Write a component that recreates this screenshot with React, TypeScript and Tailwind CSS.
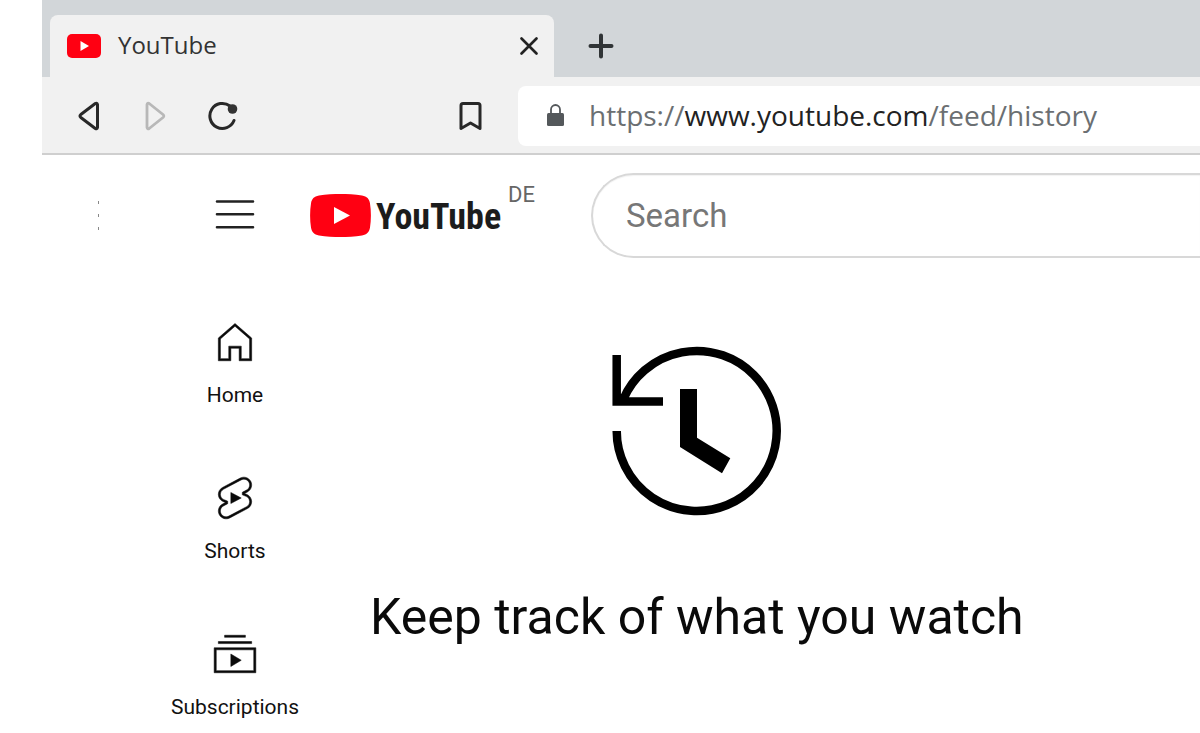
import { FC, FormEvent, ReactNode, useState } from "react";

interface NavItem {
  label: string;
  href: string;
  path: string;
}

const navItems: Array<NavItem> = [
  {
    label: "Home",
    href: "#home",
    path: "m12 4.44 7 6.09V20h-4v-6H9v6H5v-9.47l7-6.09m0-1.32-8 6.96V21h6v-6h4v6h6V10.08l-8-6.96z",
  },
  {
    label: "Shorts",
    href: "#shorts",
    path: "M10 14.65v-5.3L15 12l-5 2.65zm7.77-4.33-1.2-.5L18 9.06c1.84-.96 2.53-3.23 1.56-5.06s-3.24-2.53-5.07-1.56L6 6.94c-1.29.68-2.07 2.04-2 3.49.07 1.42.93 2.67 2.22 3.25.03.01 1.2.5 1.2.5L6 14.93c-1.83.97-2.53 3.24-1.56 5.07.97 1.83 3.24 2.53 5.07 1.56l8.5-4.5c1.29-.68 2.06-2.04 1.99-3.49-.07-1.42-.94-2.68-2.23-3.25zm-.23 5.86-8.5 4.5c-1.34.71-3.01.2-3.72-1.14-.71-1.34-.2-3.01 1.14-3.72l2.04-1.08v-1.21l-.69-.28-1.11-.46c-.99-.41-1.65-1.35-1.7-2.41-.05-1.06.52-2.06 1.46-2.56l8.5-4.5c1.34-.71 3.01-.2 3.72 1.14.71 1.34.2 3.01-1.14 3.72L15.5 9.26v1.21l1.8.74c.99.41 1.65 1.35 1.7 2.41.05 1.06-.52 2.06-1.46 2.56z",
  },
  {
    label: "Subscriptions",
    href: "#subscriptions",
    path: "M10 18v-6l5 3-5 3zm7-15H7v1h10V3zm3 3H4v1h16V6zm2 3H2v12h20V9zM3 10h18v10H3V10z",
  },
];

interface IconButtonProps {
  label: string;
  className?: string;
  disabled?: boolean;
  children: ReactNode;
}

const IconButton: FC<IconButtonProps> = ({
  label,
  className = "",
  disabled,
  children,
}) => (
  <button
    type="button"
    aria-label={label}
    disabled={disabled}
    className={`flex shrink-0 items-center justify-center ${className}`}
  >
    {children}
  </button>
);

const PlayBadge: FC<{ className: string }> = ({ className }) => (
  <svg viewBox="0 0 61 43" className={className} aria-hidden="true">
    <path
      d="M9 1.6C16 .2 24 0 30.5 0S45 .2 52 1.6C57 2.4 59.3 5 60 9.5C61.2 17 61.2 26 60 33.5C59.3 38 57 40.6 52 41.4C45 42.8 37 43 30.5 43S16 42.8 9 41.4C4 40.6 1.7 38 1 33.5C-.2 26-.2 17 1 9.5C1.7 5 4 2.4 9 1.6Z"
      fill="#ff0012"
    />
    <path d="M24 13 40 21.5 24 30Z" fill="#fff" />
  </svg>
);

const TabStrip = () => (
  <div className="flex h-[77px] items-end bg-[#d2d6d9] pl-2">
    <div className="flex h-[62px] w-[504px] items-center rounded-t-lg bg-[#f1f1f1] pr-[11px] pl-[17px]">
      <svg viewBox="0 0 34 24" className="h-6 w-[34px]" aria-hidden="true">
        <rect width="34" height="24" rx="5" fill="#ff0012" />
        <path d="M13.5 7 22 12l-8.5 5z" fill="#fff" />
      </svg>
      <span className="ml-[17px] flex-1 pb-[2px] text-2xl leading-8 text-[#333]">
        YouTube
      </span>
      <IconButton label="Close tab" className="h-7 w-7">
        <svg
          viewBox="0 0 28 28"
          className="h-7 w-7"
          fill="none"
          stroke="#222"
          strokeWidth="2.7"
          strokeLinecap="round"
        >
          <path d="M6.5 6.5 21.5 21.5M21.5 6.5 6.5 21.5" />
        </svg>
      </IconButton>
    </div>
    <IconButton label="New tab" className="ml-[31px] h-[62px] w-8">
      <svg
        viewBox="0 0 32 32"
        className="h-8 w-8"
        fill="none"
        stroke="#303436"
        strokeWidth="4"
        strokeLinecap="round"
      >
        <path d="M16 5.5v21M5.5 16h21" />
      </svg>
    </IconButton>
  </div>
);

const AddressBar = () => {
  const [editing, setEditing] = useState<boolean>(false);
  const [address, setAddress] = useState<string>(
    "https://www.youtube.com/feed/history"
  );
  const [, protocol, host, path] =
    address.match(/^(https?:\/\/)?([^/]*)(.*)$/) ?? [];

  return (
    <div className="flex h-[60px] min-w-0 flex-1 items-center rounded-l-lg bg-white pl-7">
      <svg viewBox="0 0 20 26" className="h-[26px] w-5 shrink-0" aria-hidden="true">
        <rect x="1" y="10" width="17" height="13" rx="1.5" fill="#54585b" />
        <path
          d="M5 11V6.5a4.5 4.5 0 0 1 9 0V11"
          fill="none"
          stroke="#54585b"
          strokeWidth="1.8"
        />
      </svg>
      {editing ? (
        <input
          type="text"
          aria-label="Address"
          autoFocus
          value={address}
          onChange={(e) => setAddress(e.target.value)}
          onBlur={() => setEditing(false)}
          className="ml-[23px] min-w-0 flex-1 pb-[2px] text-[28px] leading-10 text-[#222] outline-none"
        />
      ) : (
        <button
          type="button"
          onClick={() => setEditing(true)}
          className="ml-[23px] min-w-0 flex-1 truncate pb-[2px] text-left text-[28px] leading-10 text-[#6b6f72]"
        >
          {protocol}
          <span className="text-[#222]">{host}</span>
          {path}
        </button>
      )}
    </div>
  );
};

const Toolbar = () => (
  <div className="flex h-[78px] items-center border-b-2 border-[#cfcfcf] bg-[#f1f1f1] pt-[2px] pl-[30px]">
    <IconButton label="Back" className="h-8 w-8">
      <svg
        viewBox="0 0 32 32"
        className="h-8 w-8"
        fill="none"
        stroke="#282828"
        strokeWidth="3"
        strokeLinejoin="round"
      >
        <path d="M25.5 4.5v23q-.5 2-2.2 1L8.8 17.5q-1.7-1.5 0-3L23.3 3.5q1.7-1 2.2 1z" />
      </svg>
    </IconButton>
    <IconButton label="Forward" className="ml-9 h-8 w-8" disabled>
      <svg
        viewBox="0 0 32 32"
        className="h-8 w-8"
        fill="none"
        stroke="#b8b8b8"
        strokeWidth="2.8"
        strokeLinejoin="round"
      >
        <path d="M7 4.5v23q.5 2 2.2 1L23 17.5q1.7-1.5 0-3L9.2 3.5q-1.7-1-2.2 1z" />
      </svg>
    </IconButton>
    <IconButton label="Reload" className="ml-9 h-8 w-8">
      <svg
        viewBox="0 0 32 32"
        className="h-8 w-8"
        fill="none"
        stroke="#282828"
        strokeWidth="3"
        strokeLinecap="round"
      >
        <path d="M22 6A12.5 12.5 0 1 0 26 20.5" />
        <circle cx="24.5" cy="9" r="4.8" fill="#333" stroke="none" />
      </svg>
    </IconButton>
    <IconButton label="Bookmark this page" className="ml-[215px] h-8 w-8">
      <svg
        viewBox="0 0 32 32"
        className="h-8 w-8"
        fill="none"
        stroke="#282828"
        strokeWidth="3"
        strokeLinejoin="round"
      >
        <path d="M8 3.5h15q2 0 2 2V28.5l-9.5-5.5L6 28.5v-23q0-2 2-2z" />
      </svg>
    </IconButton>
    <div className="flex min-w-0 flex-1 pl-[31px]">
      <AddressBar />
    </div>
  </div>
);

const Header = () => {
  const [query, setQuery] = useState<string>("");

  const onSearchHandler = (e: FormEvent<HTMLFormElement>) => {
    e.preventDefault();
    setQuery(query.trim());
  };

  return (
    <header className="flex items-center pt-[18px] font-['Roboto',sans-serif]">
      <div className="ml-14 flex w-px flex-col gap-[10px]">
        <span className="h-[3px] bg-[#888]" />
        <span className="h-[3px] bg-[#888]" />
        <span className="h-[3px] bg-[#888]" />
      </div>
      <IconButton label="Menu" className="ml-[111px] h-[50px] w-[50px]">
        <svg
          viewBox="0 0 50 50"
          className="h-[50px] w-[50px]"
          stroke="#222"
          strokeWidth="2.6"
          strokeLinecap="round"
        >
          <path d="M7 10.5h36M7 23.2h36M7 36.2h36" />
        </svg>
      </IconButton>
      <a href="#home" className="ml-[50px] flex w-[190px] shrink-0 items-center gap-[5px]">
        <PlayBadge className="h-[43px] w-[61px] shrink-0" />
        <span className="pt-1 font-['Roboto_Condensed','Roboto',sans-serif] text-[36px] leading-[43px] font-bold text-[#1c1c1c]">
          YouTube
        </span>
      </a>
      <span className="ml-2 w-[51px] self-start pt-2 text-[22px] leading-7 text-[#666]">
        DE
      </span>
      <form onSubmit={onSearchHandler} className="ml-8 min-w-0 flex-1">
        <input
          type="text"
          aria-label="Search"
          placeholder="Search"
          value={query}
          onChange={(e) => setQuery(e.target.value)}
          className="h-[85px] w-full rounded-l-full border-2 border-r-0 border-[#d8d8d8] bg-white pl-[33px] text-[33px] text-[#222] inset-shadow-xs outline-none placeholder:text-[#777]"
        />
      </form>
    </header>
  );
};

const SideNav = () => (
  <nav className="flex w-[386px] shrink-0 flex-col gap-[66px] pt-[59px]">
    {navItems.map((item) => (
      <a
        key={item.label}
        href={item.href}
        className="flex flex-col items-center gap-4 text-[21px] leading-6 text-[#111]"
      >
        <svg
          viewBox="0 0 24 24"
          className="h-[50px] w-[50px]"
          fill="#0a0a0a"
          stroke="#0a0a0a"
          strokeWidth=".25"
        >
          <path d={item.path} />
        </svg>
        {item.label}
      </a>
    ))}
  </nav>
);

const HistoryIcon = () => (
  <svg viewBox="0 0 170 170" className="h-[170px] w-[170px]" aria-hidden="true">
    <path
      d="M4.7 85A80 80 0 1 0 11.1 53.6M4.7 9v46.5H51"
      fill="none"
      stroke="#000"
      strokeWidth="8.5"
    />
    <path d="M68 43h17v48.7l33.3 20.6-8.3 15L68 101z" fill="#000" />
  </svg>
);

const App = () => (
  <div className="min-h-screen overflow-hidden bg-white pl-[42px] font-['Open_Sans','Noto_Sans',sans-serif]">
    <TabStrip />
    <Toolbar />
    <Header />
    <div className="flex font-['Roboto',sans-serif]">
      <SideNav />
      <main className="-ml-[58px] flex flex-col items-center pt-[88px]">
        <HistoryIcon />
        <h1 className="mt-[71px] text-[50px] leading-[60px] whitespace-nowrap text-[#0a0a0a]">
          Keep track of what you watch
        </h1>
      </main>
    </div>
  </div>
);

export default App;
